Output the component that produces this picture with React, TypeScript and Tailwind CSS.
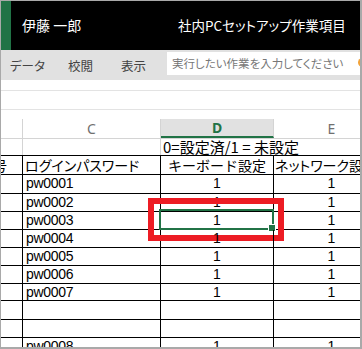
const cjk = "font-['Noto_Sans_CJK_JP','Noto_Sans',sans-serif]";
const latin = "font-['Liberation_Sans','Noto_Sans_CJK_JP',sans-serif]";

type Row = { h: string; c: string; d: string; e: string; sel?: boolean };

const rows: Row[] = [
  { h: 'h-[19px]', c: 'pw0001', d: '1', e: '1' },
  { h: 'h-[18px]', c: 'pw0002', d: '1', e: '1' },
  { h: 'h-[18px]', c: 'pw0003', d: '1', e: '1', sel: true },
  { h: 'h-[18px]', c: 'pw0004', d: '1', e: '1' },
  { h: 'h-[18px]', c: 'pw0005', d: '1', e: '1' },
  { h: 'h-[18px]', c: 'pw0006', d: '1', e: '1' },
  { h: 'h-[17px]', c: 'pw0007', d: '1', e: '1' },
  { h: 'h-[19px]', c: '', d: '', e: '' },
  { h: 'h-[18px]', c: '', d: '', e: '' },
  { h: 'h-[18px]', c: 'pw0008', d: '1', e: '1' },
];

function App() {
  return (
    <div className="w-[362px] h-[349px] border-l border-t border-r-2 border-b-2 border-[#a9a9a9] bg-white overflow-hidden flex flex-col">
      {/* title bar */}
      <div className={`h-[49px] shrink-0 bg-black flex items-center text-white text-[14px] ${cjk} [font-feature-settings:'palt']`}>
        <div className="w-[10px] h-full shrink-0 bg-[#217346]" />
        <span className="ml-[11px] w-[156px] shrink-0">伊藤 一郎</span>
        <span className="whitespace-nowrap text-[13.5px]">社内PCセットアップ作業項目</span>
      </div>

      {/* ribbon tabs */}
      <div className={`h-[30px] shrink-0 bg-[#e1e1e1] flex items-start text-[12.5px] text-[#444] ${cjk} [font-feature-settings:'palt']`}>
        <span className="ml-[9px] mt-[7px] w-[58px] shrink-0">データ</span>
        <span className="mt-[7px] w-[53px] shrink-0">校閲</span>
        <span className="mt-[7px] w-[46px] shrink-0">表示</span>
        <div className="relative mt-[2px] h-[23px] flex-1 bg-white flex items-center pl-[5px] text-[11.5px] text-[#777] whitespace-nowrap">
          実行したい作業を入力してください
          <div className="absolute right-[-7px] top-[6px] w-[9px] h-[9px] rounded-full bg-[#f2a33a]" />
        </div>
      </div>

      {/* formula area */}
      <div className="h-[11px] shrink-0 border-b border-[#e3e3e3]" />
      <div className="h-[19px] shrink-0 border-b border-[#e3e3e3]" />
      <div className="h-[9px] shrink-0" />

      {/* column headers */}
      <div className="h-[20px] shrink-0 flex border-b border-[#d4d4d4] text-[14px] text-[#707070] font-['Noto_Sans',sans-serif]">
        <div className="w-[22px] shrink-0 border-r border-[#d4d4d4]" />
        <div className="w-[138px] shrink-0 border-r border-[#d4d4d4] flex items-center justify-center">C</div>
        <div className="w-[113px] shrink-0 border-r border-[#d4d4d4] bg-[#e1e1e1] border-b-2 border-b-[#217346] flex items-center justify-center font-bold text-[#217346]">D</div>
        <div className="w-[115px] shrink-0 flex items-center justify-center">E</div>
      </div>

      {/* row 1 note */}
      <div className={`h-[17px] shrink-0 flex border-b border-black text-[15px] text-black ${cjk}`}>
        <div className="w-[22px] shrink-0 border-r border-[#d4d4d4]" />
        <div className="w-[138px] shrink-0 border-r border-[#d4d4d4]" />
        <div className="flex-1 pl-[2px] leading-[15px] whitespace-nowrap">0=設定済/1 = 未設定</div>
      </div>

      {/* table header */}
      <div className={`h-[19px] shrink-0 flex border-b border-black text-[14px] text-black ${cjk} leading-[18px]`}>
        <div className="w-[22px] shrink-0 border-r border-black overflow-hidden flex justify-end pr-[15px] whitespace-nowrap">
          <span>社員番号</span>
        </div>
        <div className="w-[138px] shrink-0 border-r border-black pl-[2px] whitespace-nowrap overflow-hidden [font-feature-settings:'palt']">ログインパスワード</div>
        <div className="w-[113px] shrink-0 border-r border-black text-center whitespace-nowrap overflow-hidden">キーボード設定</div>
        <div className="w-[115px] shrink-0 pl-[1px] whitespace-nowrap overflow-hidden [font-feature-settings:'palt']">ネットワーク設定</div>
      </div>

      {rows.map((r, i) => (
        <div key={i} className={`${r.h} shrink-0 flex border-b border-black text-[14px] text-black ${latin} leading-[17px]`}>
          <div className="w-[22px] shrink-0 border-r border-black" />
          <div className="w-[138px] shrink-0 border-r border-black pl-[3px] tracking-[-0.3px]">{r.c}</div>
          <div className="relative w-[113px] shrink-0 border-r border-black text-center">
            {r.d}
            {r.sel && (
              <>
                <div className="absolute left-[-2px] top-[-3px] w-[115px] h-[21px] border-2 border-[#217346]">
                  <div className="absolute right-[-4px] bottom-[-4px] w-[6px] h-[6px] bg-[#217346] border border-white box-content" />
                </div>
                <div className="absolute left-[-13px] top-[-14px] w-[136px] h-[43px] border-[6px] border-[#ed1c24]" />
              </>
            )}
          </div>
          <div className="w-[115px] shrink-0 text-center">{r.e}</div>
        </div>
      ))}
    </div>
  );
}

export default App;
